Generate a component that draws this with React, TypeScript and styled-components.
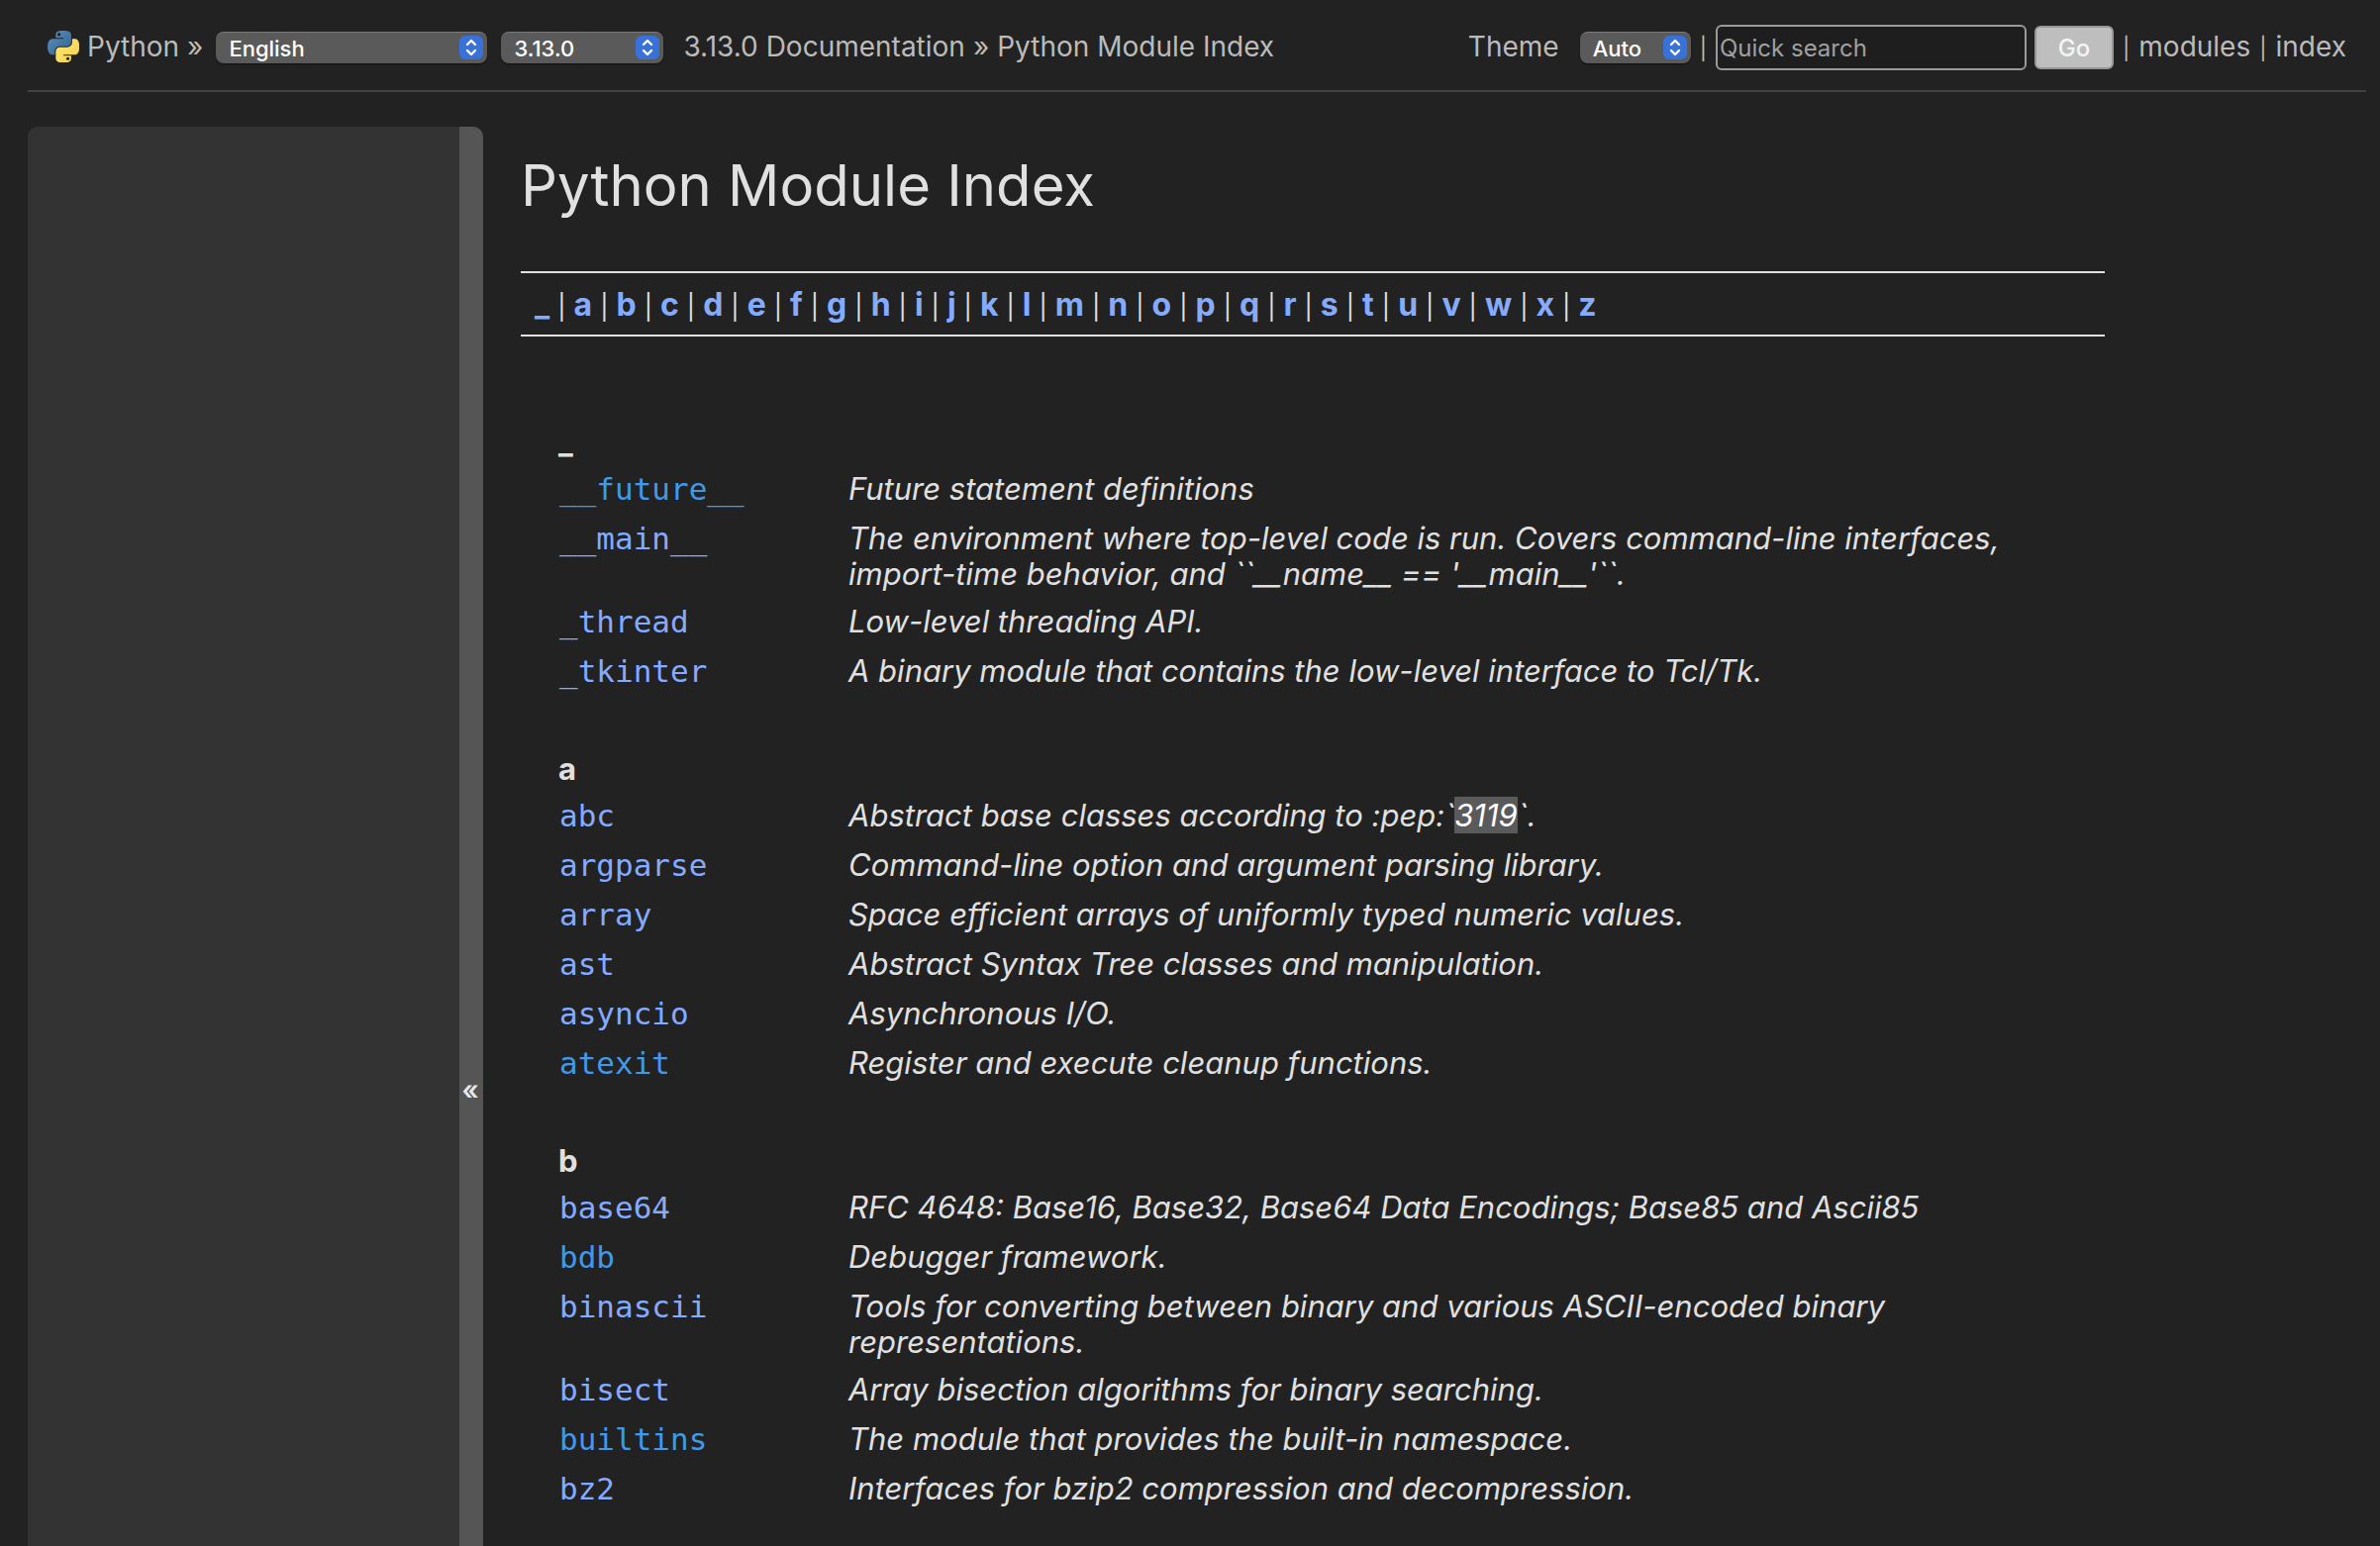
import React from "react";
import styled, { createGlobalStyle } from "styled-components";

const Global = createGlobalStyle`
  * { box-sizing: border-box; }
  body { margin: 0; background: #222; color: #e0e0e0; font-family: Inter, "Liberation Sans", sans-serif; font-size: 31px; line-height: 36px; }
  a { text-decoration: none; color: inherit; }
`;
const Page = styled.div`
  display: flex; flex-direction: column; min-height: 100vh; padding: 0 14px 0 28px;
`;
const Header = styled.nav`
  display: flex; align-items: baseline; justify-content: space-between; height: 93px;
  border-bottom: 2px solid #424242; color: #bbb; font-size: 28px; white-space: nowrap;
  padding: 25px 20px 0;
`;
const Group = styled.div`display: flex; align-items: baseline; gap: 8px;`;
const ThemeLabel = styled.label`display: flex; align-items: baseline; gap: 16px;`;
const Bar = styled.span`font-size: 22px; line-height: 1; padding: 0 1px;`;
const JumpBar = styled(Bar)`font-size: 25px; padding: 0;`;
const Picker = styled.span<{ $w: number; $gap?: number }>`
  position: relative; display: inline-flex; width: ${p => p.$w}px; margin: 0 ${p => p.$gap ?? 0}px 0 5px;
`;
const Select = styled.select`
  appearance: none; width: 100%; height: 32px; padding: 0 30px 0 13px; border: 0; border-top: 1px solid #7a7a7a;
  border-radius: 8px; background: #5a5a5a; color: #fff; font: 500 22px/28px Inter, sans-serif;
  box-shadow: 0 1px 2px rgba(0,0,0,.5);
`;
const Arrows = styled.svg`position: absolute; right: 4px; top: 4px; pointer-events: none;`;
const Search = styled.input`
  width: 314px; height: 46px; padding: 0 2px; border: 2px solid #9a9a9a; border-radius: 6px;
  background: #1e1e1e; color: #fff; font: 24px Inter, sans-serif;
  &::placeholder { color: #a0a0a0; opacity: 1; }
`;
const Go = styled.button`
  width: 80px; height: 44px; padding: 0; border: 2px solid #979797; border-radius: 6px;
  background: #bebebe; color: #f4f4f4; font: 500 24px Inter, sans-serif;
`;
const Columns = styled.div`display: flex; flex: 1; padding-top: 35px; gap: 38px;`;
const Sidebar = styled.aside`
  display: flex; justify-content: flex-end; width: 460px; flex: none; background: #333;
  border-radius: 10px 10px 0 0; overflow: hidden;
`;
const Collapse = styled.button`
  width: 24px; height: 100%; padding: 957px 2px 0 0; border: 0; background: #555; color: #e8e8e8;
  font: 600 27px Inter, sans-serif; display: flex; justify-content: center;
`;
const Main = styled.main`flex: 1; min-width: 0; max-width: 1600px;`;
const Title = styled.h1`margin: 19px 0 47px; font-size: 58px; line-height: 80px; font-weight: 400;`;
const Jump = styled.div`
  border: solid #e0e0e0; border-width: 2px 0; padding: 14px 14px 12px; display: flex; align-items: baseline; gap: 8px;
`;
const JumpLink = styled.a`color: #85abff; font-size: 32px; font-weight: 700;`;
const Table = styled.table`border-collapse: collapse; margin: 34px 0 0 32px; width: calc(100% - 64px);`;
const Letter = styled.th`text-align: left; font-weight: 700; padding: 55px 6px 5px;`;
const Name = styled.td`
  width: 299px; padding: 6px 7px 8px; vertical-align: top; font: 31px/36px "DejaVu Sans Mono", monospace;
`;
const Desc = styled.td`padding: 6px 0; vertical-align: top; font-style: italic;`;
const ModLink = styled.a<{ $visited?: boolean }>`color: ${p => (p.$visited ? "#4399e6" : "#85abff")};`;
const Mark = styled.span`background: #5a5a5a; color: #fff;`;
const LogoSvg = styled.svg`align-self: center; flex: none;`;

const Logo = () => (
  <LogoSvg width="32" height="32" viewBox="0 0 110 110" aria-hidden="true">
    <defs>
      <linearGradient id="blue" x1="0" y1="0" x2="1" y2="1"><stop stopColor="#5a92c4" /><stop offset="1" stopColor="#33608c" /></linearGradient>
      <linearGradient id="gold" x1="0" y1="0" x2="1" y2="1"><stop stopColor="#ffe873" /><stop offset="1" stopColor="#f5cf4e" /></linearGradient>
    </defs>
    <path fill="url(#blue)" d="M54.9 0C50.3 0 46 .4 42.1 1.1 30.8 3.1 28.7 7.3 28.7 15v10.2h26.8v3.4H18.6c-7.8 0-14.6 4.7-16.7 13.6-2.5 10.2-2.6 16.6 0 27.3 1.9 7.9 6.5 13.6 14.2 13.6h9.2V70.8c0-8.8 7.7-16.7 16.8-16.7h26.8c7.5 0 13.4-6.1 13.4-13.6V15c0-7.3-6.1-12.7-13.4-13.9C64.3.3 59.5 0 54.9 0ZM40.4 8.2a5.1 5.1 0 1 1 0 10.2 5.1 5.1 0 0 1 0-10.2Z" />
    <path fill="url(#gold)" d="M85.6 28.7v11.9c0 9.2-7.8 17-16.8 17H42.1c-7.3 0-13.4 6.3-13.4 13.6v25.5c0 7.3 6.3 11.5 13.4 13.6 8.5 2.5 16.6 2.9 26.8 0 6.7-2 13.4-5.9 13.4-13.6V86.5H55.5v-3.4h40.2c7.8 0 10.7-5.4 13.4-13.6 2.8-8.4 2.7-16.5 0-27.3-1.9-7.8-5.6-13.6-13.4-13.6H85.6Z" />
    <circle cx="70.6" cy="97" r="5.4" fill="#222" />
    <circle cx="40.4" cy="13.3" r="5.4" fill="#222" />
  </LogoSvg>
);
const Menu = ({ label, value, w, gap, id }: { label?: string; value: string; w: number; gap?: number; id?: string }) => (
  <Picker $w={w} $gap={gap}>
    <Select id={id} aria-label={label} defaultValue={value}><option>{value}</option></Select>
    <Arrows width="24" height="24" viewBox="0 0 24 24" fill="none" stroke="#fff" strokeWidth="2.4" strokeLinecap="round" strokeLinejoin="round">
      <rect width="24" height="24" rx="6" fill="#3871d8" stroke="none" />
      <path d="M8 9l4-4 4 4M8 15l4 4 4-4" />
    </Arrows>
  </Picker>
);

type Mod = [string, React.ReactNode, boolean?];
const groups: { letter: string; mods: Mod[] }[] = [
  { letter: "_", mods: [
    ["__future__", "Future statement definitions", true],
    ["__main__", "The environment where top-level code is run. Covers command-line interfaces, import-time behavior, and ``__name__ == '__main__'``."],
    ["_thread", "Low-level threading API."],
    ["_tkinter", "A binary module that contains the low-level interface to Tcl/Tk."],
  ] },
  { letter: "a", mods: [
    ["abc", <>Abstract base classes according to :pep:`<Mark>3119</Mark>`.</>],
    ["argparse", "Command-line option and argument parsing library."],
    ["array", "Space efficient arrays of uniformly typed numeric values."],
    ["ast", "Abstract Syntax Tree classes and manipulation."],
    ["asyncio", "Asynchronous I/O."],
    ["atexit", "Register and execute cleanup functions.", true],
  ] },
  { letter: "b", mods: [
    ["base64", "RFC 4648: Base16, Base32, Base64 Data Encodings; Base85 and Ascii85"],
    ["bdb", "Debugger framework.", true],
    ["binascii", "Tools for converting between binary and various ASCII-encoded binary representations."],
    ["bisect", "Array bisection algorithms for binary searching."],
    ["builtins", "The module that provides the built-in namespace.", true],
    ["bz2", "Interfaces for bzip2 compression and decompression."],
  ] },
];
const letters = "_abcdefghijklmnopqrstuvwxz".split("");

export default function App() {
  return (
    <Page>
      <Global />
      <Header>
        <Group>
          <Logo />
          <a href="#python">Python</a>
          <span>»</span>
          <Menu label="Language" value="English" w={274} gap={1} />
          <Menu label="Version" value="3.13.0" w={164} gap={12} />
          <a href="#docs">3.13.0 Documentation</a>
          <span>»</span>
          <a href="#modindex">Python Module Index</a>
        </Group>
        <Group>
          <ThemeLabel htmlFor="theme">Theme <Menu id="theme" value="Auto" w={112} /></ThemeLabel>
          <Bar>|</Bar>
          <Search type="text" placeholder="Quick search" aria-label="Quick search" />
          <Go type="button">Go</Go>
          <Bar>|</Bar>
          <a href="#modules">modules</a>
          <Bar>|</Bar>
          <a href="#index">index</a>
        </Group>
      </Header>
      <Columns>
        <Sidebar><Collapse type="button" aria-label="Collapse sidebar">«</Collapse></Sidebar>
        <Main>
          <Title>Python Module Index</Title>
          <Jump>
            {letters.map((l, i) => (
              <React.Fragment key={l}>
                {i > 0 && <JumpBar>|</JumpBar>}
                <JumpLink href={`#cap-${l}`}>{l}</JumpLink>
              </React.Fragment>
            ))}
          </Jump>
          <Table>
            {groups.map(g => (
              <tbody key={g.letter}>
                <tr><Letter colSpan={2} id={`cap-${g.letter}`}>{g.letter}</Letter></tr>
                {g.mods.map(([name, text, visited]) => (
                  <tr key={name}>
                    <Name><ModLink href={`#${name}`} $visited={visited}>{name}</ModLink></Name>
                    <Desc>{text}</Desc>
                  </tr>
                ))}
              </tbody>
            ))}
          </Table>
        </Main>
      </Columns>
    </Page>
  );
}
